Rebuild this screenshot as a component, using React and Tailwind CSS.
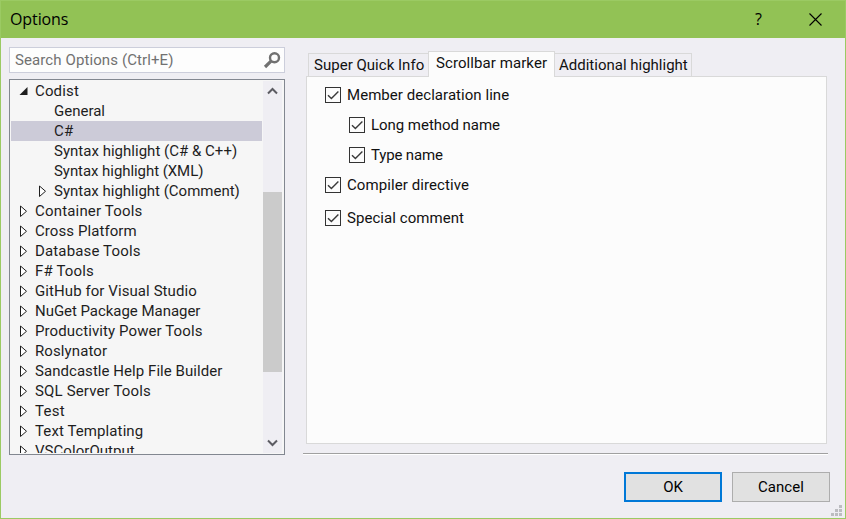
const rows = [
  { label: 'Codist', state: 'open' },
  { label: 'General', child: true, tracking: 'tracking-normal' },
  { label: 'C#', child: true, selected: true },
  { label: 'Syntax highlight (C# & C++)', child: true, tracking: 'tracking-[0.02px]' },
  { label: 'Syntax highlight (XML)', child: true, tracking: 'tracking-[-0.06px]' },
  { label: 'Syntax highlight (Comment)', child: true, state: 'closed', tracking: 'tracking-normal' },
  { label: 'Container Tools', tracking: 'tracking-[0.18px]' },
  { label: 'Cross Platform', tracking: 'tracking-[0.08px]' },
  { label: 'Database Tools' },
  { label: 'F# Tools' },
  { label: 'GitHub for Visual Studio', tracking: 'tracking-[0.08px]' },
  { label: 'NuGet Package Manager', tracking: 'tracking-[-0.04px]' },
  { label: 'Productivity Power Tools', tracking: 'tracking-[0.1px]' },
  { label: 'Roslynator', tracking: 'tracking-[0.1px]' },
  { label: 'Sandcastle Help File Builder', tracking: 'tracking-[0.05px]' },
  { label: 'SQL Server Tools' },
  { label: 'Test', tracking: 'tracking-[0.25px]' },
  { label: 'Text Templating', tracking: 'tracking-[0.1px]' },
  { label: 'VSColorOutput', tracking: 'tracking-[0.05px]' },
];

function Arrow({ state }) {
  return (
    <svg className="h-[12px] w-[9px] shrink-0" viewBox="0 0 9 12">
      {state === 'open' && <path d="M8.5 2v8H0.5z" fill="#1e1e1e" />}
      {state === 'closed' && (
        <path d="M1.5 1v10.5L7.5 6.25z" fill="#fff" stroke="#1e1e1e" strokeWidth="1" />
      )}
    </svg>
  );
}

function TreeRow({ label, child, selected, state = child ? undefined : 'closed', tracking = '' }) {
  return (
    <div
      className={`flex h-5 shrink-0 items-center gap-[7px] ${child ? 'pl-[27px]' : 'pl-2'} ${
        selected ? 'bg-[#cccbd8]' : ''
      }`}
    >
      <Arrow state={state} />
      <span className={`whitespace-nowrap ${tracking}`}>{label}</span>
    </div>
  );
}

function Chevron({ down }) {
  return (
    <svg className="h-2 w-[11px]" viewBox="0 0 11 8">
      <path
        d={down ? 'M1 1.5L5.5 6L10 1.5' : 'M1 6.5L5.5 2L10 6.5'}
        fill="none"
        stroke="#5c5c62"
        strokeWidth="2"
      />
    </svg>
  );
}

function Check({ label, className = '' }) {
  return (
    <label className={`flex h-4 items-center gap-1.5 ${className}`}>
      <span className="flex h-4 w-4 border border-[#333]">
        <svg className="h-[14px] w-[14px]" viewBox="0 0 14 14">
          <path d="M2 7.2L5.4 10.6L12.4 3.6" fill="none" stroke="#3a3a3a" strokeWidth="1.4" />
        </svg>
      </span>
      <span className="whitespace-nowrap">{label}</span>
    </label>
  );
}

export default function App() {
  return (
    <div className="flex h-[519px] w-[846px] flex-col overflow-hidden border border-[#9bca63] bg-[#efeef3] font-['Roboto',sans-serif] text-[15px] leading-5 tracking-[0.15px] text-[#1e1e1e]">
      <header className="flex h-[37px] shrink-0 items-center bg-[#92c255] pl-[9px] text-black">
        <h1 className="grow pb-px font-['Open_Sans',sans-serif] text-base tracking-[-0.1px]">Options</h1>
        <span className="w-[54px] pb-0.5 font-['Open_Sans',sans-serif] text-base">?</span>
        <svg className="mr-[23px] h-[13px] w-[13px]" viewBox="0 0 13 13">
          <path d="M0.5 0.5l12 12M12.5 0.5l-12 12" stroke="#000" strokeWidth="1.1" />
        </svg>
      </header>

      <main className="flex h-[417px] shrink-0">
        <aside className="flex w-[284px] flex-col pl-2 pt-[9px]">
          <div className="flex h-[26px] items-center justify-between border border-[#cccedb] bg-[#fdfdfd] pl-[5px] pr-[3px] text-[#717171]">
            <span className="tracking-[0.1px]">Search Options (Ctrl+E)</span>
            <svg className="h-[18px] w-[18px]" viewBox="0 0 18 18">
              <circle cx="11.5" cy="6.7" r="4.5" fill="none" stroke="#717171" strokeWidth="2.4" />
              <path d="M8.3 9.9L2 16" stroke="#717171" strokeWidth="3.2" />
            </svg>
          </div>
          <div className="mt-1.5 flex h-[376px] border border-[#828790] bg-[#f6f6f6] p-px">
            <div className="flex h-[372px] w-[251px] flex-col overflow-hidden">
              {rows.map((row) => (
                <TreeRow key={row.label} {...row} />
              ))}
            </div>
            <div className="ml-px flex w-[19px] flex-col items-center bg-[#efeef3]">
              <div className="flex h-[111px] items-start pt-[6px]">
                <Chevron />
              </div>
              <div className="h-[180px] w-full bg-[#cbcbcb]" />
              <div className="flex grow items-end pb-[6px]">
                <Chevron down />
              </div>
            </div>
          </div>
        </aside>

        <section className="flex w-[543px] flex-col pl-[18px] pt-[13px] text-[#111]">
          <div className="flex flex-col pl-[3px] pr-px">
            <nav className="z-10 -mb-px flex h-[26px] items-end pl-0.5">
              <span className="mb-px flex h-[23px] w-[120px] items-center whitespace-nowrap border border-b-0 border-r-0 border-[#d9d9d9] pl-[5px] tracking-[0.02px]">
                Super Quick Info
              </span>
              <span className="flex h-[26px] w-[127px] items-center whitespace-nowrap border border-b-0 border-[#d9d9d9] bg-[#fcfcfc] pb-[3px] pl-[7px] tracking-[0.08px]">
                Scrollbar marker
              </span>
              <span className="mb-px flex h-[23px] w-[137px] items-center whitespace-nowrap border border-b-0 border-l-0 border-[#d9d9d9] pl-1 tracking-normal">
                Additional highlight
              </span>
            </nav>
            <div className="flex h-[368px] flex-col border border-[#d9d9d9] bg-[#fcfcfc] pl-[18px] pt-[10px]">
              <Check label="Member declaration line" className="tracking-[0.05px]" />
              <Check label="Long method name" className="ml-6 mt-[14px] tracking-[-0.04px]" />
              <Check label="Type name" className="ml-6 mt-[14px] tracking-[-0.15px]" />
              <Check label="Compiler directive" className="mt-[14px] tracking-[0.09px]" />
              <Check label="Special comment" className="mt-[17px] tracking-[0.06px]" />
            </div>
          </div>
          <div className="mt-[9px] h-0.5 shrink-0 border-b border-t border-b-white border-t-[#a0a0a0]" />
        </section>
      </main>

      <footer className="flex grow pl-[623px] pt-[17px] text-black">
        <button className="h-[30px] w-[98px] border-2 border-[#0078d7] bg-[#e1e1e1] tracking-normal">OK</button>
        <button className="ml-[10px] h-[30px] w-[98px] border border-[#adadad] bg-[#e1e1e1] tracking-[0.05px]">Cancel</button>
        <svg className="mt-[33px] ml-px h-[11px] w-[11px]" viewBox="0 0 11 11" fill="#bcbcc0">
          <path d="M8 0h3v3h-3zM4 4h3v3h-3zM8 4h3v3h-3zM0 8h3v3h-3zM4 8h3v3h-3zM8 8h3v3h-3z" />
        </svg>
      </footer>
    </div>
  );
}
